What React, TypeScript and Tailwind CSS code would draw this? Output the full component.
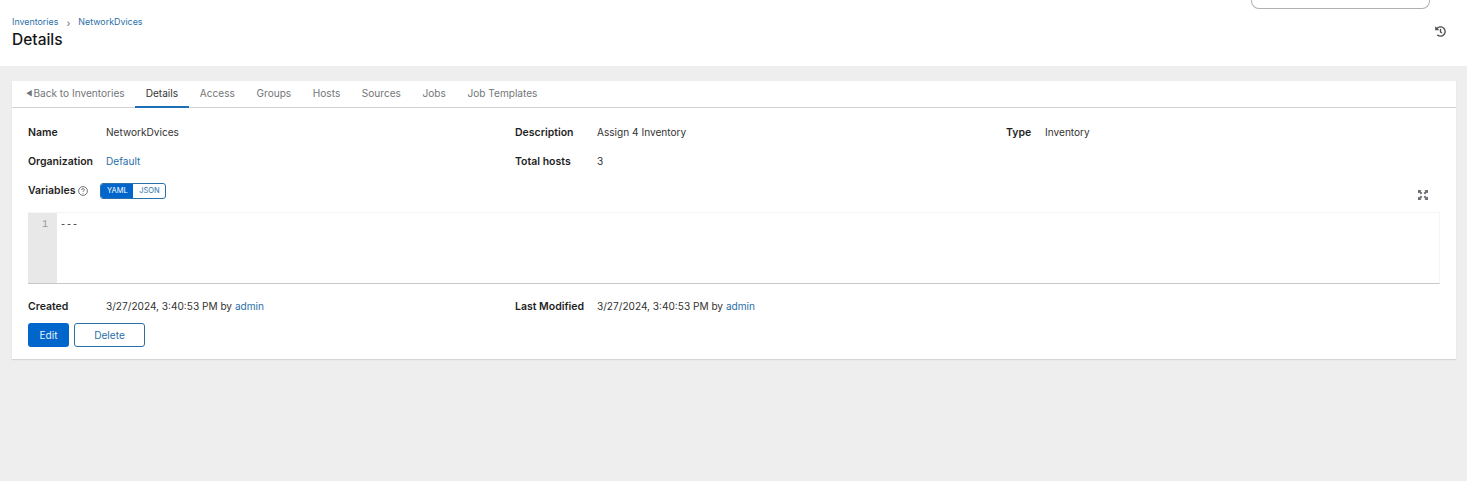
import React from "react";

const FONT = "font-['Inter','Noto_Sans',sans-serif]";

const TABS = ["Access", "Groups", "Hosts", "Sources", "Jobs", "Job Templates"];

function HistoryIcon() {
  return (
    <svg width="11" height="11" viewBox="0 0 512 512" fill="#4f5255">
      <path d="M504 255.5C504.3 392.2 393 503.9 256.3 504c-59 0-113.2-20.5-155.8-54.9-11.1-8.9-11.9-25.5-1.8-35.6l11.3-11.3c8.6-8.6 22.4-9.6 31.9-2C173.1 425.1 212.8 440 256 440c101.7 0 184-82.3 184-184 0-101.7-82.3-184-184-184-48.8 0-93.1 19-126.1 49.9l50.8 50.8c10.1 10.1 2.9 27.3-11.3 27.3H24c-8.8 0-16-7.2-16-16V38.6c0-14.3 17.2-21.4 27.3-11.3l49.4 49.4C129.2 34.1 189.6 8 256 8c136.9 0 247.7 110.7 248 247.5zM323 334.3l9.8-12.6c8.1-10.5 6.2-25.5-4.2-33.7L288 256.3V152c0-13.3-10.7-24-24-24h-16c-13.3 0-24 10.7-24 24v135.7l65.4 50.9c10.5 8.1 25.5 6.2 33.6-4.3z" />
    </svg>
  );
}

function ExpandIcon() {
  return (
    <svg width="10" height="10" viewBox="0 0 10 10" fill="#6a6e73">
      <path d="M0 0h3.6L2.5 1.1 4.4 3 3 4.4 1.1 2.5 0 3.6z" />
      <path d="M10 0v3.6L8.9 2.5 7 4.4 5.6 3l1.9-1.9L6.4 0z" />
      <path d="M0 10V6.4l1.1 1.1L3 5.6 4.4 7 2.5 8.9 3.6 10z" />
      <path d="M10 10H6.4l1.1-1.1L5.6 7 7 5.6l1.9 1.9L10 6.4z" />
    </svg>
  );
}

function HelpIcon() {
  return (
    <svg width="10" height="10" viewBox="0 0 10 10" fill="none" stroke="#4f5255" strokeWidth="0.8">
      <circle cx="5" cy="5" r="4.4" />
      <path d="M3.6 4c0-.9.6-1.4 1.4-1.4s1.4.5 1.4 1.2c0 1-1.4 1-1.4 2" />
      <path d="M5 7v.7" />
    </svg>
  );
}

function Field({ label, children, width }: { label: string; children: React.ReactNode; width: string }) {
  return (
    <div className="flex items-center">
      <span className={`text-[10.5px] font-semibold text-[#1f1f1f] ${width}`}>{label}</span>
      <span className="text-[#333333]">{children}</span>
    </div>
  );
}

export default function App() {
  return (
    <div className={`${FONT} h-[481px] w-full overflow-hidden bg-[#eeeeee] text-[10.1px] text-[#151515]`}>
      {/* page header */}
      <header className="relative h-[66px] bg-white pl-3 pr-[21px]">
        <div className="ml-auto mr-[16px] h-[9px] w-[179px] rounded-b-[8px] border border-t-0 border-[#b0b0b0]" />
        <nav className="mt-[8px] flex h-[11px] items-center text-[8.9px] leading-none text-[#2b6fa8]">
          <span>Inventories</span>
          <span className="w-[20px] text-center text-[10px] text-[#6a6e73]">›</span>
          <span>NetworkDvices</span>
        </nav>
        <div className="flex items-center justify-between">
          <h1 className="text-[15.5px] leading-[24px] font-medium">Details</h1>
          <div className="-mt-[18px]">
            <HistoryIcon />
          </div>
        </div>
      </header>

      {/* card */}
      <main className="mt-[15px] mr-[11px] ml-3 h-[278px] bg-white shadow-[0_1px_1px_rgba(0,0,0,0.1)]">
        <div className="flex h-[27px] items-stretch border-b border-[#d2d2d2] pl-[14px] text-[#737679]">
          <a className="flex items-center pr-[10px]">
            <span className="mr-[1px] text-[7px]">◀</span>
            Back to Inventories
          </a>
          <a className="-mb-px flex items-center border-b-2 border-[#1f6fb5] px-[11px] text-[#333333]">Details</a>
          {TABS.map((tab) => (
            <a key={tab} className="flex items-center px-[10.8px]">
              {tab}
            </a>
          ))}
        </div>

        <div className="px-4">
          <div className="grid grid-cols-[487px_491px_1fr] pt-[17px]">
            <Field label="Name" width="w-[78px]">NetworkDvices</Field>
            <Field label="Description" width="w-[82px]">Assign 4 Inventory</Field>
            <Field label="Type" width="w-[39px]">Inventory</Field>
          </div>
          <div className="mt-[13px] grid grid-cols-[487px_491px_1fr]">
            <Field label="Organization" width="w-[78px]">
              <span className="text-[#2b6fa8]">Default</span>
            </Field>
            <Field label="Total hosts" width="w-[82px]">3</Field>
          </div>

          <div className="mt-[13px] flex h-[16px] items-center">
            <span className="text-[10.5px] font-semibold text-[#1f1f1f]">Variables</span>
            <span className="ml-[3px]">
              <HelpIcon />
            </span>
            <div className="ml-[12px] flex h-[16px] overflow-hidden rounded-[3px] border border-[#2b6fa8] text-[7.5px] leading-none">
              <span className="flex w-[32px] items-center justify-center bg-[#0066cc] text-white">YAML</span>
              <span className="flex w-[32px] items-center justify-center text-[#2b6fa8]">JSON</span>
            </div>
            <div className="mt-2 mr-3 ml-auto">
              <ExpandIcon />
            </div>
          </div>

          <div className="mt-[13px] flex h-[72px] border border-l-0 border-[#f5f5f5] border-b-[#c8c8c8] font-['Liberation_Mono',monospace]">
            <div className="w-[29px] bg-[#e8e8e8] pt-[4px] pr-[9px] text-right text-[#999999]">1</div>
            <div className="pt-[4px] pl-[3px] text-[#444444]">---</div>
          </div>

          <div className="mt-[15px] grid grid-cols-[487px_491px_1fr]">
            <Field label="Created" width="w-[78px]">
              3/27/2024, 3:40:53 PM by <span className="text-[#2b6fa8]">admin</span>
            </Field>
            <Field label="Last Modified" width="w-[82px]">
              3/27/2024, 3:40:53 PM by <span className="text-[#2b6fa8]">admin</span>
            </Field>
          </div>

          <div className="mt-[9px] flex gap-[5px]">
            <button className="h-[24px] w-[41px] rounded-[3px] bg-[#0066cc] text-[#e8f1fb]">Edit</button>
            <button className="h-[24px] w-[71px] rounded-[3px] border border-[#2b6fa8] text-[#2b6fa8]">Delete</button>
          </div>
        </div>
      </main>
    </div>
  );
}
